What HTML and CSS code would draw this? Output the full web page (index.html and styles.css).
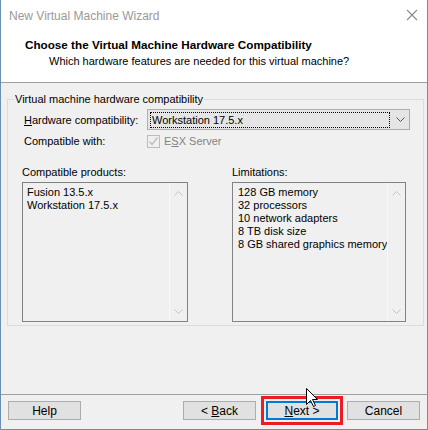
FILE: index.html
```html
<!DOCTYPE html>
<html lang="en">
<head>
    <meta charset="UTF-8">
    <title>New Virtual Machine Wizard</title>
    <link rel="stylesheet" href="styles.css">
</head>
<body>
    <div class="window">
        <div class="titlebar">
            <span class="title">New Virtual Machine Wizard</span>
            <svg class="close" width="12" height="12" viewBox="0 0 12 12">
                <path d="M1 1 L11 11 M11 1 L1 11" stroke="#8a8a8a" stroke-width="1.1" fill="none"/>
            </svg>
        </div>

        <div class="header">
            <h1>Choose the Virtual Machine Hardware Compatibility</h1>
            <p>Which hardware features are needed for this virtual machine?</p>
        </div>

        <div class="content">
            <fieldset class="group">
                <legend>Virtual machine hardware compatibility</legend>

                <div class="row">
                    <span class="label"><u>H</u>ardware compatibility:</span>
                    <div class="select">
                        <span class="focus">Workstation 17.5.x</span>
                        <svg class="chevron" width="9" height="5" viewBox="0 0 9 5">
                            <path d="M0.5 0.5 L4.5 4.5 L8.5 0.5" stroke="#555" fill="none"/>
                        </svg>
                    </div>
                </div>

                <div class="row row-check">
                    <span class="label">Compatible with:</span>
                    <span class="checkbox">
                        <svg width="11" height="11" viewBox="0 0 11 11">
                            <path d="M1.5 5.5 L4 8.5 L9.5 1.5" stroke="#bcbcbc" stroke-width="1.3" fill="none"/>
                        </svg>
                    </span>
                    <span class="disabled">E<u>S</u>X Server</span>
                </div>

                <div class="lists">
                    <div class="listcol products">
                        <div class="listlabel">Compatible products:</div>
                        <div class="listbox">
                            <div class="items">
                                <div>Fusion 13.5.x</div>
                                <div>Workstation 17.5.x</div>
                            </div>
                            <div class="scroll">
                                <svg width="9" height="5" viewBox="0 0 9 5"><path d="M0.5 4.5 L4.5 0.5 L8.5 4.5" stroke="#c4c4c4" fill="none"/></svg>
                                <svg width="9" height="5" viewBox="0 0 9 5"><path d="M0.5 0.5 L4.5 4.5 L8.5 0.5" stroke="#c4c4c4" fill="none"/></svg>
                            </div>
                        </div>
                    </div>
                    <div class="listcol limits">
                        <div class="listlabel">Limitations:</div>
                        <div class="listbox">
                            <div class="items">
                                <div>128 GB memory</div>
                                <div>32 processors</div>
                                <div>10 network adapters</div>
                                <div>8 TB disk size</div>
                                <div>8 GB shared graphics memory</div>
                            </div>
                            <div class="scroll">
                                <svg width="9" height="5" viewBox="0 0 9 5"><path d="M0.5 4.5 L4.5 0.5 L8.5 4.5" stroke="#c4c4c4" fill="none"/></svg>
                                <svg width="9" height="5" viewBox="0 0 9 5"><path d="M0.5 0.5 L4.5 4.5 L8.5 0.5" stroke="#c4c4c4" fill="none"/></svg>
                            </div>
                        </div>
                    </div>
                </div>
            </fieldset>
        </div>

        <div class="buttons">
            <button class="btn">Help</button>
            <span class="spacer"></span>
            <button class="btn">&lt; <u>B</u>ack</button>
            <button class="btn btn-default"><u>N</u>ext &gt;</button>
            <button class="btn">Cancel</button>
        </div>

        <!-- mouse pointer over the dialog -->
        <svg class="cursor" width="13" height="20" viewBox="0 0 13 20">
            <path d="M0.5 0.5 L0.5 16.5 L4.5 12.5 L7.5 18.5 L9.5 17.5 L6.5 11.5 L11.5 11.5 Z" fill="#fff" stroke="#000" stroke-linejoin="miter"/>
        </svg>
    </div>
</body>
</html>
```

FILE: styles.css
```css
body{
    margin: 0;
    font-family: "Liberation Sans", Arial, sans-serif;
    font-size: 11px;
    color: #000;
}

.window{
    position: relative;
    width: 426px;
    height: 429px;
    border: 1px solid #6b8fb3;
    border-top: none;
    background-color: #f0f0f0;
    display: flex;
    flex-direction: column;
    overflow: hidden;
}

.titlebar{
    height: 31px;
    background-color: #fff;
    display: flex;
    align-items: center;
    padding-left: 8px;
    padding-right: 9px;
}

.title{
    flex: 1;
    color: #999;
    font-size: 12px;
}

.close{
    margin-top: -1px;
}

.header{
    height: 51px;
    background-color: #fff;
    border-bottom: 1px solid #a0a0a0;
    padding-left: 24px;
}

.header h1{
    margin: 7px 0 0 0;
    font-size: 11.7px;
    font-weight: bold;
    line-height: 14px;
}

.header p{
    margin: 2px 0 0 24px;
    line-height: 14px;
}

.content{
    flex: 1;
    padding: 9px 7px 0 6px;
    border-bottom: 1px solid #a0a0a0;
}

.group{
    margin: 0;
    height: 234px;
    box-sizing: border-box;
    border: 1px solid #dcdcdc;
    padding: 0 13px 0 14px;
}

.group legend{
    padding: 0 1px;
    margin-left: -8px;
    line-height: 15px;
}

.row{
    display: flex;
    align-items: center;
    height: 21px;
    margin-top: 2px;
}

.label{
    width: 123px;
    padding-left: 2px;
}

.select{
    width: 255px;
    height: 19px;
    border: 1px solid #adadad;
    background-color: #e5e5e5;
    display: flex;
    align-items: center;
    padding: 0 4px 0 2px;
}

.focus{
    flex: 1;
    height: 14px;
    line-height: 14px;
    border: 1px dotted #000;
    padding-left: 1px;
    margin-right: 6px;
}

.row-check{
    margin-top: 3px;
    height: 16px;
}

.checkbox{
    width: 11px;
    height: 11px;
    border: 1px solid #bcbcbc;
    margin-right: 4px;
}

.checkbox svg{
    display: block;
}

.disabled{
    color: #838383;
}

.lists{
    display: flex;
    margin-top: 16px;
}

.listlabel{
    line-height: 14px;
    margin-bottom: 3px;
}

.products{
    width: 166px;
}

.limits{
    width: 174px;
    margin-left: 44px;
}

.listbox{
    height: 138px;
    border: 1px solid #828282;
    display: flex;
}

.items{
    flex: 1;
    padding: 3px 0 0 4px;
    line-height: 13px;
    white-space: nowrap;
}

.products .items{
    padding-left: 4px;
}

.limits .items{
    padding-left: 5px;
}

.scroll{
    width: 17px;
    border-left: 1px solid #f8f8f8;
    display: flex;
    flex-direction: column;
    justify-content: space-between;
    align-items: center;
    padding: 8px 0 7px 0;
}

.scroll svg{
    display: block;
}

.buttons{
    height: 34px;
    display: flex;
    align-items: center;
    padding: 0 7px;
    gap: 9px;
}

.spacer{
    flex: 1;
}

.btn{
    width: 73px;
    height: 19px;
    padding: 0;
    border: 1px solid #adadad;
    background-color: #e1e1e1;
    font-family: inherit;
    font-size: 12px;
    color: #000;
    margin-top: -3px;
}

.btn-default{
    border: 2px solid #0078d7;
    width: 72px;
    margin-left: 1px;
    outline: 3px solid #ed1c24;
    outline-offset: 2px;
}

.cursor{
    position: absolute;
    left: 305px;
    top: 388px;
}
```
